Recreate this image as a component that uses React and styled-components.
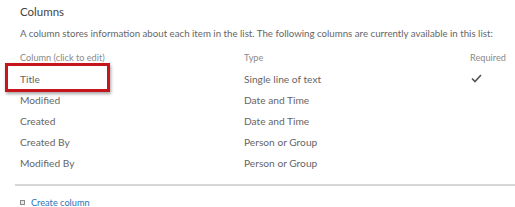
import React from 'react';
import styled, { createGlobalStyle } from 'styled-components';

const Global = createGlobalStyle`
  html, body {
    margin: 0;
    padding: 0;
    background: #fff;
  }
  body {
    font-family: Lato, "Open Sans", sans-serif;
  }
`

const Page = styled.div`
  width: 515px;
  height: 207px;
  overflow: hidden;
  padding: 5px 0 0 20px;
  box-sizing: border-box;
`

const Heading = styled.div`
  font-size: 11.5px;
  color: #444;
  line-height: 14px;
`

const Description = styled.div`
  margin-top: 8px;
  font-size: 9.7px;
  color: #666;
  line-height: 13px;
  white-space: nowrap;
`

const Table = styled.div`
  margin-top: 7px;
  display: grid;
  grid-template-columns: 224px 226px 45px;
  grid-auto-rows: 21px;
  align-items: center;
`

const Head = styled.div`
  font-size: 9.2px;
  color: #8a8a8a;
`

const Cell = styled.div`
  position: relative;
  font-size: 10.2px;
  color: #666;
`

const Marker = styled.div`
  position: absolute;
  left: -15px;
  top: -10px;
  width: 99px;
  height: 23px;
  border: 3px solid #c4161c;
  box-shadow: 1px 2px 3px rgba(0, 0, 0, 0.35);
`

const Check = styled.div`
  padding-left: 1px;
  display: flex;
  align-items: center;
`

const Divider = styled.div`
  margin: 11px 0 0 -5px;
  border-top: 2px solid #d6d6d6;
`

const CreateLink = styled.div`
  margin-top: 11px;
  display: flex;
  align-items: center;
  gap: 6px;
  font-size: 9.2px;
  color: #2a73b8;
`

const Bullet = styled.span`
  width: 3px;
  height: 3px;
  border: 1px solid #8a8a8a;
  background: #e8e8e8;
`

const rows = [
  ['Title', 'Single line of text', true],
  ['Modified', 'Date and Time'],
  ['Created', 'Date and Time'],
  ['Created By', 'Person or Group'],
  ['Modified By', 'Person or Group'],
]

export default function App() {
  return (
    <Page>
      <Global />
      <Heading>Columns</Heading>
      <Description>
        A column stores information about each item in the list. The following columns are currently available in this list:
      </Description>
      <Table>
        <Head>Column (click to edit)</Head>
        <Head>Type</Head>
        <Head>Required</Head>
        {rows.map(([name, type, req], i) => (
          <React.Fragment key={name}>
            <Cell>
              {i === 0 && <Marker />}
              {name}
            </Cell>
            <Cell>{type}</Cell>
            <Check>
              {req && (
                <svg width="11" height="9" viewBox="0 0 11 9">
                  <path d="M1 4.5 L4 7.5 L10 1" fill="none" stroke="#555" strokeWidth="1.7" />
                </svg>
              )}
            </Check>
          </React.Fragment>
        ))}
      </Table>
      <Divider />
      <CreateLink>
        <Bullet />
        Create column
      </CreateLink>
    </Page>
  )
}
